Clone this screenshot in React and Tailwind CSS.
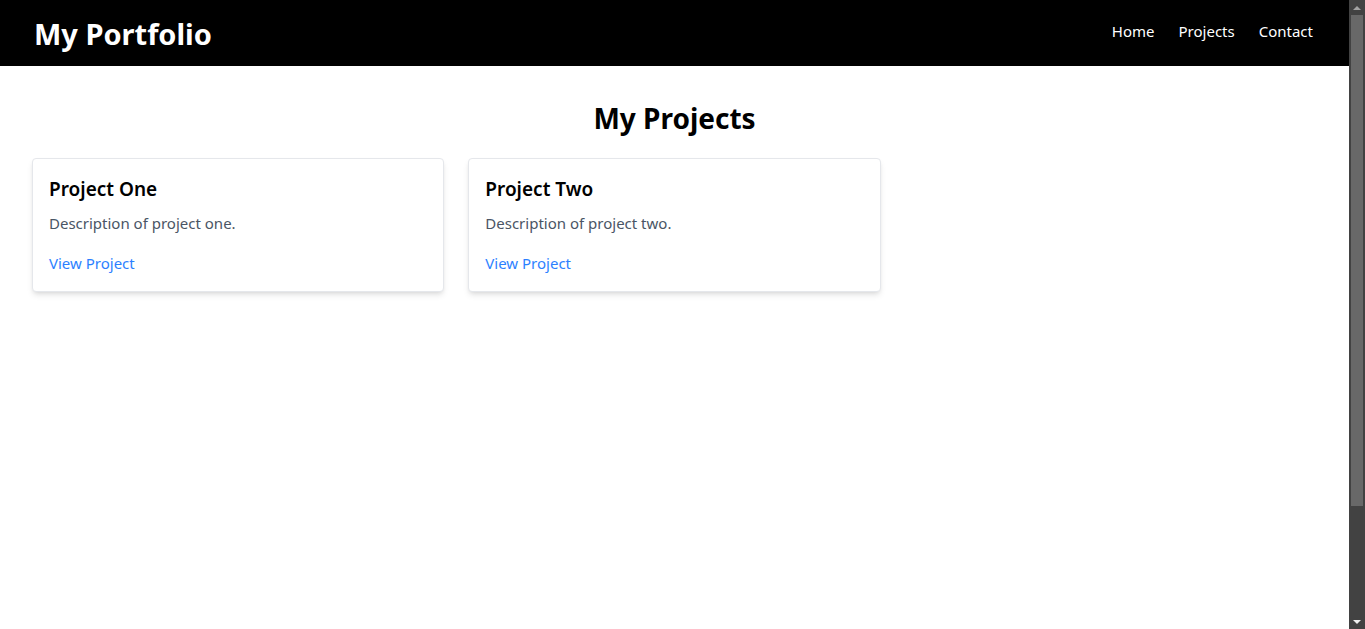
import React from 'react';

const projects = [
  { title: 'Project One', desc: 'Description of project one.' },
  { title: 'Project Two', desc: 'Description of project two.' },
];

const FakeScrollbar = () => (
  <div className="w-[16px] h-full bg-[#424242] flex flex-col items-center">
    <div className="h-[15px] w-full flex items-center justify-center">
      <div className="w-0 h-0 border-l-[4px] border-r-[4px] border-b-[4px] border-l-transparent border-r-transparent border-b-[#a3a3a3]" />
    </div>
    <div className="w-[12px] h-[491px] bg-[#686868]" />
    <div className="flex-1" />
    <div className="h-[15px] w-full flex items-center justify-center">
      <div className="w-0 h-0 border-l-[4px] border-r-[4px] border-t-[4px] border-l-transparent border-r-transparent border-t-[#f0f0f0]" />
    </div>
  </div>
);

const App = () => {
  return (
    <div className="h-screen w-full flex overflow-hidden bg-white font-['Noto_Sans',sans-serif]">
      <div className="flex-1 min-w-0">
        <header className="bg-black text-white h-[66px] pl-[34px] pr-9 flex items-center justify-between">
          <h1 className="text-[29px] font-bold leading-none">My Portfolio</h1>
          <nav className="flex gap-6 text-[15px] pl-0.5 pb-1">
            <a href="#">Home</a>
            <a href="#">Projects</a>
            <a href="#">Contact</a>
          </nav>
        </header>
        <main className="px-8 pt-[34px]">
          <h2 className="text-[28px] leading-9 font-bold text-center mb-[22px]">My Projects</h2>
          <div className="grid grid-cols-3 gap-6">
            {projects.map((p) => (
              <div key={p.title} className="bg-white border border-gray-200 rounded shadow-md p-4">
                <h3 className="text-[19px] leading-7 font-semibold text-black">{p.title}</h3>
                <p className="text-[15px] leading-6 text-gray-600 mt-2">{p.desc}</p>
                <a href="#" className="block mt-4 text-[15px] leading-6 text-blue-500">View Project</a>
              </div>
            ))}
          </div>
        </main>
      </div>
      <FakeScrollbar />
    </div>
  );
};

export default App;
